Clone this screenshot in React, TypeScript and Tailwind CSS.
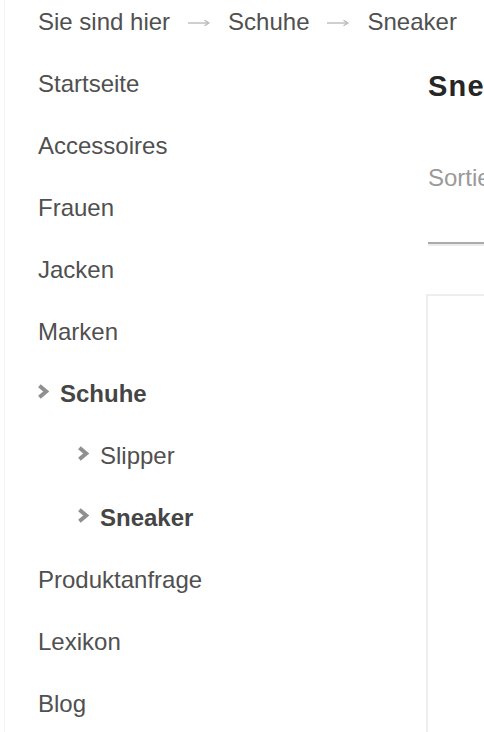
import React from "react";

const Chevron = () => (
  <span className="flex w-[23px] shrink-0 pt-[8px]">
    <svg width="12" height="15" viewBox="0 0 12 15" className="block h-[15px] w-[12px]">
      <path d="M2.4 1.8 L9.2 7.5 L2.4 13.2" fill="none" stroke="#909090" strokeWidth="4" strokeLinejoin="miter" />
    </svg>
  </span>
);

const Arrow = () => (
  <span className="mx-[18px] flex h-[36px] w-[22px] items-center pt-[2px]">
    <svg width="22" height="8" viewBox="0 0 22 8">
      <line x1="0" y1="4" x2="20" y2="4" stroke="#b5b5b5" strokeWidth="1.3" />
      <path d="M16.5 1.2 L21 4 L16.5 6.8" fill="none" stroke="#b5b5b5" strokeWidth="1.2" />
    </svg>
  </span>
);

type Item = { label: string; level: number; bold?: boolean; chevron?: boolean };

const items: Item[] = [
  { label: "Startseite", level: 0 },
  { label: "Accessoires", level: 0 },
  { label: "Frauen", level: 0 },
  { label: "Jacken", level: 0 },
  { label: "Marken", level: 0 },
  { label: "Schuhe", level: 0, bold: true, chevron: true },
  { label: "Slipper", level: 1, chevron: true },
  { label: "Sneaker", level: 1, bold: true, chevron: true },
  { label: "Produktanfrage", level: 0 },
  { label: "Lexikon", level: 0 },
  { label: "Blog", level: 0 },
];

export default function App() {
  return (
    <div
      className="min-h-[732px] bg-white pl-[4px] text-[24px] leading-[36px] text-[#505050]"
      style={{ fontFamily: '"Liberation Sans", Arial, Helvetica, sans-serif' }}
    >
      <div className="flex min-h-[732px] border-l border-[#f3f3f3]">
        <div className="w-[421px] shrink-0 pl-[33px] pt-[4px]">
          <div className="flex whitespace-nowrap">
            <span>Sie sind hier</span>
            <Arrow />
            <span>Schuhe</span>
            <Arrow />
            <span>Sneaker</span>
          </div>
          <ul className="mt-[13px]">
            {items.map((it) => (
              <li
                key={it.label}
                className={`flex h-[62px] py-[13px] ${it.level === 1 ? "pl-[40px]" : ""} ${
                  it.chevron ? "-ml-[1px]" : ""
                }`}
              >
                {it.chevron && <Chevron />}
                <span className={it.bold ? "font-bold text-[#454545]" : ""}>{it.label}</span>
              </li>
            ))}
          </ul>
        </div>
        <div className="min-w-0 flex-1 overflow-hidden whitespace-nowrap">
          <div className="ml-[2px] mt-[68px] text-[29px] font-bold leading-[36px] tracking-[1.2px] text-[#262626]">
            Sneaker
          </div>
          <div className="ml-[2px] mt-[56px] text-[#9a9a9a]">Sortieren nach:</div>
          <div className="ml-[2px] mt-[46px] h-[2px] w-[400px] bg-[#ababab]" />
          <div className="ml-[2px] h-[2px] w-[400px] bg-[#ececec]" />
          <div className="mt-[48px] h-[460px] w-[400px] border-2 border-[#eeeeee]" />
        </div>
      </div>
    </div>
  );
}
